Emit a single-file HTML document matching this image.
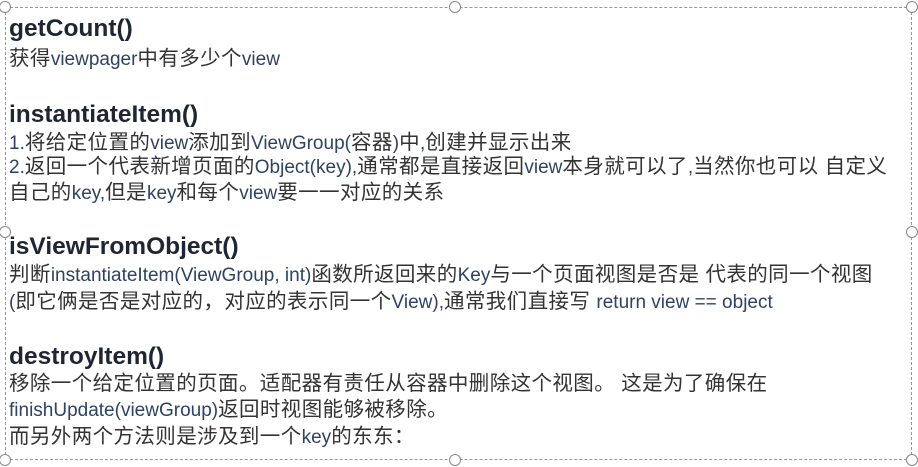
<!DOCTYPE html>
<html><head><meta charset="utf-8"><style>
body{margin:0;width:918px;height:467px;background:#fff;overflow:hidden;position:relative;font-family:"Liberation Sans","Noto Sans CJK SC",sans-serif;color:#333}
.box{position:absolute;left:5px;top:7px;width:907px;height:453px;border:1px dashed #999;box-sizing:border-box}
.h{position:absolute;left:9px;font-weight:bold;font-size:24.5px;line-height:26px;color:#1f2533;white-space:nowrap}
.l{position:absolute;left:9px;font-size:20.5px;line-height:24px;white-space:nowrap;color:#333;letter-spacing:0.4px}
.l b{font-weight:normal;color:#2e4266;font-size:19px;letter-spacing:0}
.c{position:absolute;width:12px;height:12px;border:1px solid #888;border-radius:50%;background:#fff;box-sizing:border-box}
</style></head><body>
<div class="box"></div>
<div class="c" style="left:-1px;top:1px"></div><div class="c" style="left:449px;top:1px"></div><div class="c" style="left:906px;top:1px"></div>
<div class="c" style="left:-1px;top:226px"></div><div class="c" style="left:906px;top:226px"></div>
<div class="c" style="left:-1px;top:454px"></div><div class="c" style="left:449px;top:454px"></div><div class="c" style="left:906px;top:454px"></div>
<div class="h" style="top:16px">getCount()</div>
<div class="l" style="top:47px">获得<b>viewpager</b>中有多少个<b>view</b></div>
<div class="h" style="top:102px">instantiateItem()</div>
<div class="l" style="top:131px"><b>1.</b>将给定位置的<b>view</b>添加到<b>ViewGroup(</b>容器<b>)</b>中<b>,</b>创建并显示出来</div>
<div class="l" style="top:155px"><b>2.</b>返回一个代表新增页面的<b>Object(key),</b>通常都是直接返回<b>view</b>本身就可以了<b>,</b>当然你也可以 自定义</div>
<div class="l" style="top:181px">自己的<b>key,</b>但是<b>key</b>和每个<b>view</b>要一一对应的关系</div>
<div class="h" style="top:234px">isViewFromObject()</div>
<div class="l" style="top:263px">判断<b>instantiateItem(ViewGroup, int)</b>函数所返回来的<b>Key</b>与一个页面视图是否是 代表的同一个视图</div>
<div class="l" style="top:290px"><b>(</b>即它俩是否是对应的，对应的表示同一个<b>View),</b>通常我们直接写 <b>return view == object</b></div>
<div class="h" style="top:344px">destroyItem()</div>
<div class="l" style="top:372px">移除一个给定位置的页面。适配器有责任从容器中删除这个视图。 这是为了确保在</div>
<div class="l" style="top:398px"><b>finishUpdate(viewGroup)</b>返回时视图能够被移除。</div>
<div class="l" style="top:425px">而另外两个方法则是涉及到一个<b>key</b>的东东：</div>
</body></html>
